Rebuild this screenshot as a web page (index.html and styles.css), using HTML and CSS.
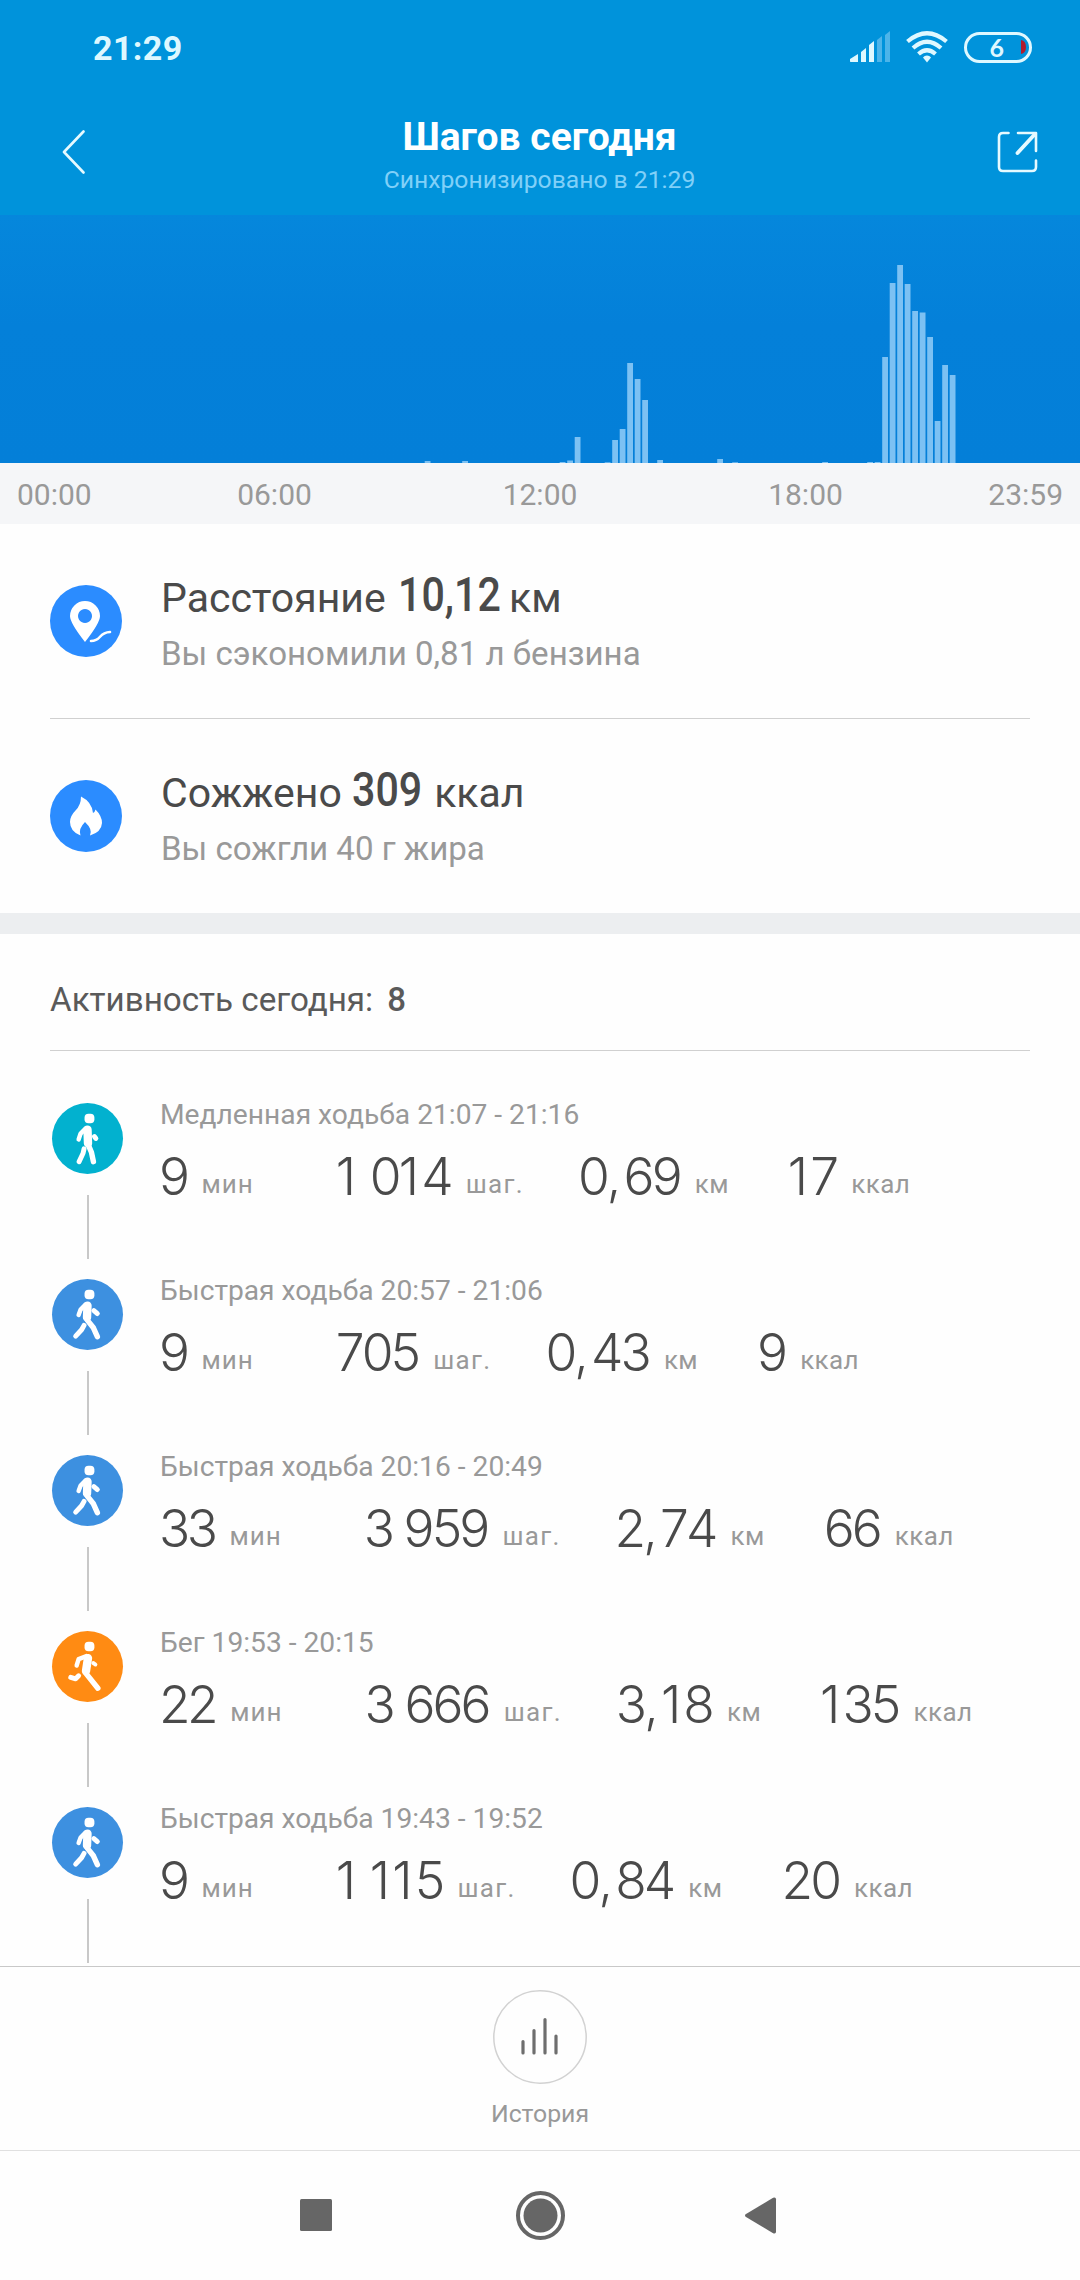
FILE: index.html
```html
<!DOCTYPE html>
<html lang="ru">
<head>
<meta charset="utf-8">
<title>Шагов сегодня</title>
<link rel="stylesheet" href="styles.css">
</head>
<body>
<svg class="defs" aria-hidden="true">
  <symbol id="slow" viewBox="0 0 72 72">
    <rect x="33" y="11" width="10" height="9.500" rx="4"/>
    <g fill="none" stroke="#fff" stroke-linecap="round" stroke-linejoin="round">
      <path stroke-width="4.500" d="M34 26l-5 5-2 6"/>
      <path stroke-width="8.500" d="M36 27l.5 14"/>
      <path stroke-width="5" d="M43 34l1.500 2M32.500 46.500l-1 4.500-4 8.500"/>
      <path stroke-width="5.500" d="M37 43l3 7 2 9.500"/>
    </g>
  </symbol>
  <symbol id="fast" viewBox="0 0 72 72">
    <rect x="33" y="11" width="10" height="9.500" rx="4"/>
    <g fill="none" stroke="#fff" stroke-linecap="round" stroke-linejoin="round">
      <path stroke-width="4.500" d="M34 26l-5 5-2 5.500"/>
      <path stroke-width="8.500" d="M36 27l-.5 12"/>
      <path stroke-width="5" d="M42.500 32l3.500 3M32.500 47l-2.500 4.500-6 6.500"/>
      <path stroke-width="5.500" d="M36 42l6 7.500 4 9"/>
    </g>
  </symbol>
  <symbol id="run" viewBox="0 0 72 72">
    <rect x="33" y="11" width="10" height="9.500" rx="4"/>
    <g fill="none" stroke="#fff" stroke-linecap="round" stroke-linejoin="round">
      <path stroke-width="4.500" d="M35 25.500l-8 3-2 6.500"/>
      <path stroke-width="8.500" d="M36.500 27.500l-2 13"/>
      <path stroke-width="4" d="M42 32.500l2 1.500"/>
      <path stroke-width="5" d="M19 47l5 1.500 3-3"/>
      <path stroke-width="5.500" d="M34 42.500l12.500 15.500"/>
    </g>
  </symbol>
</svg>
<header class="header">
  <div class="status">
    <span class="clock">21:29</span>
    <div class="status-icons">
      <svg class="signal" width="42" height="32" viewBox="0 0 42 32">
        <path fill="#dff8ff" d="M1 30.500v-2.500l8-5v8H1.500zM12 21l5-4v14h-5zM20 14l5-4v21h-5z"/>
        <path fill="#4db4e9" d="M28 9l5-4v26h-5zM36 4l5-4v31h-5z"/>
      </svg>
      <svg class="wifi" width="42" height="32" viewBox="0 0 42 32" fill="none" stroke="#dff8ff" stroke-width="4.200">
        <path d="M1.500 10.500Q21-6 40.500 10.500M7 17Q21 4.500 35 17M12.500 23Q21 15.500 29.500 23"/>
        <path fill="#dff8ff" stroke="none" d="M21 24.500q2.500 0 4 2L21 31.500 17 26.500q1.500-2 4-2z"/>
      </svg>
      <div class="battery"><span>6</span><svg width="5" height="14" viewBox="0 0 5 14"><path fill="#b01c2e" d="M0 0q5 1 5 7t-5 7z"/></svg></div>
    </div>
  </div>
  <div class="bar">
    <svg width="24" height="44" viewBox="0 0 24 44" fill="none" stroke="#e6faff" stroke-width="2.600" stroke-linecap="round" stroke-linejoin="round"><path d="M21.500 1.500 2 22l19.500 20.500"/></svg>
    <div class="heading">
      <h1>Шагов сегодня</h1>
      <p>Синхронизировано в 21:29</p>
    </div>
    <svg width="42" height="42" viewBox="0 0 42 42" fill="none" stroke="#e6faff" stroke-width="2.600" stroke-linecap="round" stroke-linejoin="round"><path d="M11.500 2H6Q2 2 2 6v30q0 4 4 4h29q4 0 4-4v-6.500M21 2h18v18"/><path stroke-width="3.800" d="M38 3 20.500 22"/></svg>
  </div>
</header>
<svg class="chart" width="1080" height="248" viewBox="0 0 1080 248" fill="#7cc1f3">
  <path d="M424.700 248v-2h5.800v2zM462.200 248v-2h5.800v2zM559.700 248v-1h5.800v1zM567.200 248v-2.500h5.800v2.500zM574.700 248v-26h5.800v26zM604.700 248v-.8h5.800v.8zM612.200 248v-23h5.800v23zM619.700 248v-34h5.800v34zM627.200 248v-100h5.800v100zM634.700 248v-84h5.800v84zM642.200 248v-63h5.800v63zM657.200 248v-3h5.800v3zM717.200 248v-4h5.800v4zM732.200 248v-.8h5.800v.8zM822.200 248v-1h5.800v1zM867.200 248v-1h5.800v1zM874.700 248v-1h5.800v1z"/>
  <path d="M882.200 248v-106h5.800v106zM889.700 248v-180h5.800v180zM897.200 248v-198h5.800v198zM904.700 248v-179h5.800v179zM912.200 248v-152h5.800v152zM919.700 248v-150.500h5.800v150.500zM927.200 248v-126h5.800v126zM934.700 248v-42h5.800v42zM942.200 248v-98h5.800v98zM949.700 248v-88h5.800v88z"/>
</svg>
<div class="axis"><span>00:00</span><span>06:00</span><span>12:00</span><span>18:00</span><span>23:59</span></div>
<section class="summary">
  <div class="fact">
    <svg width="72" height="72" viewBox="0 0 72 72"><circle cx="36" cy="36" r="36" fill="#2b8cff"/><path fill="#fff" fill-rule="evenodd" d="M35 57Q20 38 20 31a15 15 0 0 1 30 0q0 7-15 26zM35 24a7 7 0 1 0 .01 0z"/><path fill="none" stroke="#fff" stroke-width="2.600" stroke-linecap="round" d="M41 56c11 0 7-8.500 19-9"/></svg>
    <div><p class="fact-title">Расстояние <b class="km">10,12</b> км</p><p class="fact-note">Вы сэкономили 0,81 л бензина</p></div>
  </div>
  <div class="fact">
    <svg width="72" height="72" viewBox="0 0 72 72"><circle cx="36" cy="36" r="36" fill="#2b8cff"/><path fill="#fff" d="M31 16.500Q42 22 43 33q2-1 2.500-3.500Q52 36 52 43q-.5 9-12 12.500 3-6-5-13.500-7 7-4.500 13.500Q20 51.500 20 42q0-6 5.500-11.500T31 16.500z"/></svg>
    <div><p class="fact-title">Сожжено <b class="kcal">309</b> ккал</p><p class="fact-note">Вы сожгли 40 г жира</p></div>
  </div>
</section>
<h2>Активность сегодня: <b>8</b></h2>
<main class="list">
  <article class="item slow">
    <div class="rail"><svg class="badge"><use href="#slow"/></svg><i></i></div>
    <div><p class="when">Медленная ходьба 21:07 - 21:16</p>
    <p class="stats"><b>9</b><span>мин</span><b><i>1</i> 0<i>1</i>4</b><span>шаг.</span><b>0<i>,</i>69</b><span>км</span><b><i>1</i>7</b><span>ккал</span></p></div>
  </article>
  <article class="item fast">
    <div class="rail"><svg class="badge"><use href="#fast"/></svg><i></i></div>
    <div><p class="when">Быстрая ходьба 20:57 - 21:06</p>
    <p class="stats"><b>9</b><span>мин</span><b>705</b><span>шаг.</span><b>0<i>,</i>43</b><span>км</span><b>9</b><span>ккал</span></p></div>
  </article>
  <article class="item fast">
    <div class="rail"><svg class="badge"><use href="#fast"/></svg><i></i></div>
    <div><p class="when">Быстрая ходьба 20:16 - 20:49</p>
    <p class="stats"><b>33</b><span>мин</span><b>3 959</b><span>шаг.</span><b>2<i>,</i>74</b><span>км</span><b>66</b><span>ккал</span></p></div>
  </article>
  <article class="item run">
    <div class="rail"><svg class="badge"><use href="#run"/></svg><i></i></div>
    <div><p class="when">Бег 19:53 - 20:15</p>
    <p class="stats"><b>22</b><span>мин</span><b>3 666</b><span>шаг.</span><b>3<i>,</i><i>1</i>8</b><span>км</span><b><i>1</i>35</b><span>ккал</span></p></div>
  </article>
  <article class="item fast">
    <div class="rail"><svg class="badge"><use href="#fast"/></svg><i></i></div>
    <div><p class="when">Быстрая ходьба 19:43 - 19:52</p>
    <p class="stats"><b>9</b><span>мин</span><b><i>1</i> <i>1</i><i>1</i>5</b><span>шаг.</span><b>0<i>,</i>84</b><span>км</span><b>20</b><span>ккал</span></p></div>
  </article>
</main>
<footer class="history">
  <svg width="94" height="94" viewBox="0 0 94 94" fill="none"><circle cx="47" cy="47" r="46.200" stroke="#d2d2d2" stroke-width="1.500"/><path stroke="#6e6e6e" stroke-width="3.200" stroke-linecap="round" d="M30 51.500V63M41 40.500V63M52 29.500V63M63 46V63"/></svg>
  <span>История</span>
</footer>
<nav class="nav">
  <svg width="480" height="50" viewBox="0 0 480 50" fill="#666"><rect y="9" width="32" height="32" rx="1.500"/><circle cx="240.500" cy="25.500" r="17"/><circle cx="240.500" cy="25.500" r="22.500" fill="none" stroke="#666" stroke-width="4"/><path d="M445.600 24.300q-1.200 1.200 0 2.400l27.500 16.500q2.900 1 2.900-1.500V9.300q0-2.500-2.900-1.500z"/></svg>
</nav>
</body>
</html>
```
FILE: styles.css
```css
* { box-sizing: border-box; }
body { margin: 0; width: 1080px; height: 2280px; overflow: hidden; display: flex; flex-direction: column; background: #fefefe; font-family: Roboto, "Noto Sans", sans-serif; color: #4a4a4a; }
p, h1, h2 { margin: 0; font-weight: 400; }
svg { display: block; flex: none; }
.defs { width: 0; height: 0; position: absolute; }

.header { height: 215px; flex: none; background: #0093db; }
.status { height: 94px; padding: 0 48px 0 93px; display: flex; align-items: center; justify-content: space-between; }
.clock { font-size: 34px; font-weight: 700; letter-spacing: .4px; color: #dff8ff; line-height: 40px; padding-top: 2px; }
.status-icons { display: flex; align-items: center; gap: 16px; }
.signal { margin-right: -1px; }
.battery { width: 68px; height: 31px; border: 3px solid #dff8ff; border-radius: 16px; display: flex; align-items: center; justify-content: flex-end; gap: 17px; padding-right: 3px; color: #dff8ff; font: 700 25px/24px Lato, sans-serif; }
.bar { height: 121px; padding: 0 41px 0 62px; display: flex; justify-content: space-between; }
.bar > svg { margin-top: 37px; }
.bar > svg:first-child { margin-top: 36px; }
.heading { text-align: center; padding: 20px 4px 0 0; }
h1 { font-size: 39px; font-weight: 700; line-height: 46px; color: #fff; }
.heading p { font-size: 24.700px; line-height: 30px; margin-top: 5px; color: #80d0f8; }

.chart { background: linear-gradient(#0587dc, #0480d9 45%, #047fd8); }
.axis { height: 61px; flex: none; padding: 1px 17px 0; display: grid; grid-template-columns: 124.500px 266px 265px 266px 124.500px; align-items: center; justify-items: center; background: #f5f6f8; font-size: 30px; color: #999; }
.axis span:first-child { justify-self: start; }
.axis span:last-child { justify-self: end; }

.summary { height: 389px; flex: none; padding: 0 50px; }
.fact { height: 195px; display: flex; align-items: center; gap: 39px; }
.fact:first-child { border-bottom: 1px solid #d0d0d0; }
.fact:last-child { height: 194px; }
.fact-title { font-size: 41px; line-height: 56px; height: 56px; margin-top: -1px; display: flex; align-items: baseline; white-space: pre; }
.fact-title b { font-size: 49px; font-weight: 500; transform: scaleX(.84) translateY(-1px); transform-origin: 0 50%; }
.km { width: 100px; margin: 0 1px 0 2px; }
.kcal { width: 71px; margin-right: 1px; }
.fact-note { font-size: 33.100px; line-height: 40px; margin-top: 10px; color: #999; }

h2 { height: 138px; flex: none; margin-top: 0; padding: 21px 0 0 50px; border-top: 21px solid #eceef0; font-size: 33.200px; line-height: 90px; color: #5a5a5a; }
h2 b { font-size: 33px; font-weight: 500; margin-left: 6px; }

.list { height: 916px; flex: none; margin: -1px 0 0; padding: 53px 0 0; overflow: hidden; position: relative; }
.list::before { content: ""; position: absolute; left: 50px; right: 50px; top: 0; border-top: 1px solid #d0d0d0; }
.item { height: 176px; display: flex; padding-left: 52px; gap: 37px; }
.rail { width: 71px; display: flex; flex-direction: column; align-items: center; gap: 21px; }
.badge { width: 71px; height: 71px; border-radius: 50%; fill: #fff; }
.slow .badge { background: #02b1cf; }
.fast .badge { background: #3d90e0; }
.run .badge { background: #ff8b13; }
.rail i { width: 2px; height: 64px; background: #c8c8c8; }
.when { font-size: 28.200px; line-height: 34px; margin-top: -5px; color: #999; }
.stats { display: flex; align-items: baseline; margin-top: 14px; white-space: nowrap; }
.stats b { font: 300 51.500px/60px Inter, sans-serif; letter-spacing: -2.900px; font-kerning: none; font-feature-settings: "calt" 0; color: #4a4a4a; }
.stats b:first-child { letter-spacing: -3.500px; margin-left: -1px; }
.stats i { font-style: normal; letter-spacing: 2.200px; }
.stats span { font-size: 26px; letter-spacing: 1px; color: #999; margin-left: 15px; transform: translateY(-2px); }
.stats span:nth-of-type(1) { margin-right: 82px; }
.stats span:nth-of-type(2) { margin-right: 54px; letter-spacing: 1.300px; }
.stats span:nth-of-type(3) { margin-right: 59px; letter-spacing: .4px; }
.stats span:nth-of-type(4) { letter-spacing: .4px; }

.history { height: 184px; flex: none; border-top: 1px solid #c8c8c8; display: flex; flex-direction: column; align-items: center; padding-top: 23px; }
.history span { font-size: 24.800px; line-height: 30px; margin-top: 15px; color: #999; }
.nav { height: 130px; flex: none; border-top: 1px solid #e0e0e0; display: flex; align-items: center; justify-content: center; padding-bottom: 2px; }
```
